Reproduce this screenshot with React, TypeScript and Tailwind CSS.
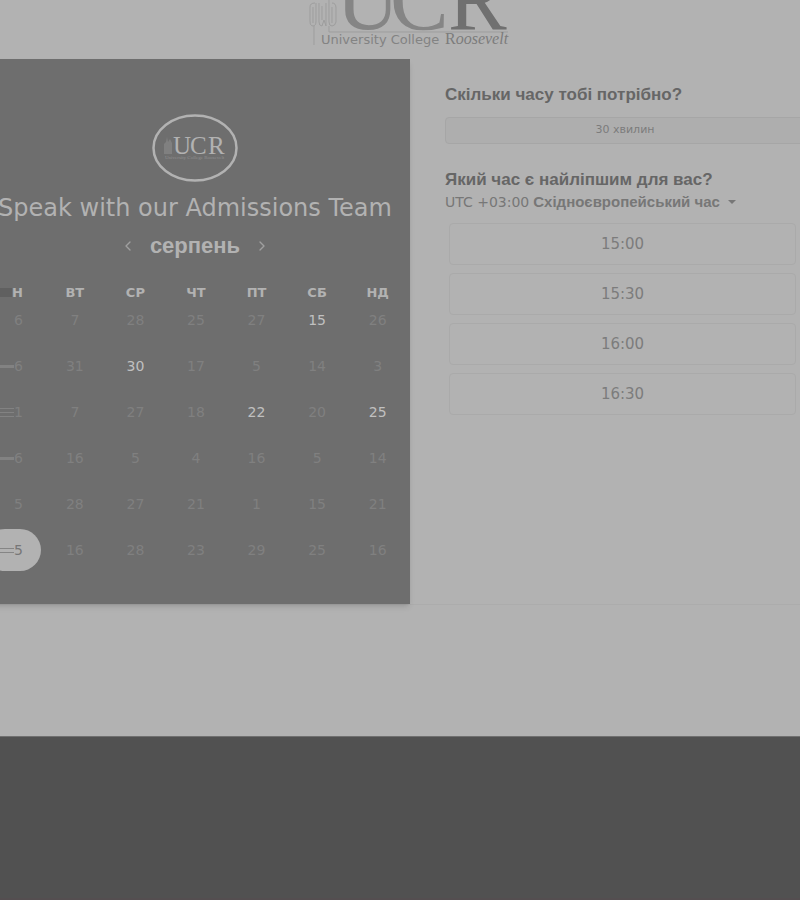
import type { ReactNode } from "react";
import { ChevronLeft, ChevronRight } from "lucide-react";

type Day = { n: string; open?: boolean; selected?: boolean; lines?: number };

const weekdays = ["Н", "ВТ", "СР", "ЧТ", "ПТ", "СБ", "НД"];

const weeks: Day[][] = [
  [{ n: "6" }, { n: "7" }, { n: "28" }, { n: "25" }, { n: "27" }, { n: "15", open: true }, { n: "26" }],
  [{ n: "6", lines: 1 }, { n: "31" }, { n: "30", open: true }, { n: "17" }, { n: "5" }, { n: "14" }, { n: "3" }],
  [{ n: "1", lines: 3 }, { n: "7" }, { n: "27" }, { n: "18" }, { n: "22", open: true }, { n: "20" }, { n: "25", open: true }],
  [{ n: "6", lines: 1 }, { n: "16" }, { n: "5" }, { n: "4" }, { n: "16" }, { n: "5" }, { n: "14" }],
  [{ n: "5" }, { n: "28" }, { n: "27" }, { n: "21" }, { n: "1" }, { n: "15" }, { n: "21" }],
  [{ n: "5", selected: true, lines: 2 }, { n: "16" }, { n: "28" }, { n: "23" }, { n: "29" }, { n: "25" }, { n: "16" }],
];

const times = ["15:00", "15:30", "16:00", "16:30"];

function Logo() {
  return (
    <svg viewBox="0 0 210 59" className="h-[59px] w-[210px]" role="img" aria-label="UCR University College Roosevelt">
      <g fill="none" stroke="#9d9d9d" strokeWidth="1">
        <path d="M6 3q-5 0-5 4v14q0 5 3 5t3-5V3M10 3v19q0 4 3 4l2-6 2 6V3M20 0v22q0 4 3 4t4-4V8q0-5-4-5M5 26v19M20 26v6h179" />
        <path d="M4 7v16M13 6v14M23 7v16" />
      </g>
      <g fontFamily="Liberation Serif, serif" fontSize="88">
        <text x="27" y="29" fill="#858585">U</text>
        <text x="81" y="29" fill="#858585">C</text>
        <text x="139" y="29" fill="#707070">R</text>
      </g>
      <text x="12" y="44" fontFamily="DejaVu Sans, sans-serif" fontSize="13" fill="#838383">University College</text>
      <text x="136" y="44" fontFamily="Liberation Serif, serif" fontSize="16" fill="#7c7c7c">
        R<tspan fontStyle="italic">oosevelt</tspan>
      </text>
    </svg>
  );
}

function Badge() {
  return (
    <svg viewBox="0 0 86 68" className="h-[68px] w-[86px]" role="img" aria-label="UCR">
      <ellipse cx="43" cy="34" rx="41.5" ry="32.5" fill="none" stroke="#b2b2b2" strokeWidth="2.5" />
      <path d="M12 40V30l2-2 1-5 1 5 2-3 2 4v11z" fill="#808080" />
      <g fontFamily="Liberation Serif, serif" fontSize="25" fill="#b2b2b2">
        <text x="21" y="40">U</text>
        <text x="38" y="40">C</text>
        <text x="56" y="40">R</text>
      </g>
      <text x="13" y="45" fontFamily="Liberation Serif, serif" fontSize="5" fill="#909090">University College Roosevelt</text>
    </svg>
  );
}

function Lines({ count, dark }: { count: number; dark?: boolean }) {
  return (
    <span aria-hidden="true" className="flex w-[14px] shrink-0 flex-col gap-[3px]">
      {Array.from({ length: count }, (_, i) => (
        <span key={i} className={`w-full ${count === 1 ? "h-[3px]" : "h-px"} ${dark ? "bg-[#858585]" : "bg-[#828282]"}`} />
      ))}
    </span>
  );
}

function Heading({ children }: { children: ReactNode }) {
  return <h2 className="font-['Liberation_Sans',sans-serif] text-[17px] leading-5 font-bold text-[#666666]">{children}</h2>;
}

export default function App() {
  return (
    <div className="flex min-h-screen flex-col overflow-hidden bg-[#b2b2b2] font-['DejaVu_Sans',sans-serif]">
      <header className="flex justify-center pl-7">
        <Logo />
      </header>

      <main className="-mx-5 grid grid-cols-[43fr_41fr] border-b border-[#acacac]">
        <section className="bg-[#6e6e6e] pt-[55px] pb-[31px] text-[#b2b2b2] shadow-md">
          <div className="flex justify-center">
            <Badge />
          </div>
          <h1 className="mt-3 text-center text-2xl leading-7 whitespace-nowrap">Speak with our Admissions Team</h1>
          <div className="mt-3 flex items-center justify-center gap-[14px]">
            <button type="button" aria-label="Попередній місяць">
              <ChevronLeft className="size-4 text-[#a0a0a0]" />
            </button>
            <span className="font-['Liberation_Sans',sans-serif] text-[22px] leading-6 font-bold">серпень</span>
            <button type="button" aria-label="Наступний місяць">
              <ChevronRight className="size-4 text-[#a0a0a0]" />
            </button>
          </div>

          <div className="mt-[30px] pr-[2px] pl-[4px]">
            <table className="w-full table-fixed border-collapse text-center">
              <thead>
                <tr>
                  {weekdays.map((day, i) => (
                    <th key={day} scope="col" className="h-[9px] p-0 text-[13px] leading-[9px] font-bold">
                      {i === 0 ? (
                        <span className="flex items-center pl-4">
                          <span aria-hidden="true" className="h-[9px] w-[12px] bg-[#606060]" />Н
                        </span>
                      ) : (
                        day
                      )}
                    </th>
                  ))}
                </tr>
              </thead>
              <tbody>
                {weeks.map((week, w) => (
                  <tr key={w}>
                    {week.map((day, d) => (
                      <td key={d} className="h-[46px] p-0">
                        <button
                          type="button"
                          disabled={!day.open && !day.selected}
                          className={`flex h-[42px] items-center text-[14px] leading-4 ${
                            d === 0 ? "w-[57px] pl-4" : "mx-auto w-14 justify-center"
                          } ${
                            day.selected
                              ? "rounded-full bg-[#b2b2b2] text-[#777777]"
                              : day.open
                                ? "text-[#c0c0c0]"
                                : "text-[#808080]"
                          }`}
                        >
                          {d === 0 && <Lines count={day.lines ?? 0} dark={day.selected} />}
                          {day.n}
                        </button>
                      </td>
                    ))}
                  </tr>
                ))}
              </tbody>
            </table>
          </div>
        </section>

        <section className="pt-[26px] pr-[15px] pl-[35px]">
          <Heading>Скільки часу тобі потрібно?</Heading>
          <button type="button" className="mt-3 h-[27px] w-full rounded-sm border border-[#a6a6a6] bg-[#aeaeae] text-[11px] text-[#7c7c7c]">
            30 хвилин
          </button>
          <div className="mt-[26px]">
            <Heading>Який час є найліпшим для вас?</Heading>
          </div>
          <button type="button" className="mt-[2px] flex items-center gap-1 text-[14px] leading-5 text-[#777777]">
            <span>UTC +03:00</span>
            <span className="font-['Liberation_Sans',sans-serif] text-[15px] font-bold">Східноєвропейський час</span>
            <svg viewBox="0 0 8 4" className="ml-1 h-1 w-2" aria-hidden="true">
              <path d="M0 0h8L4 4z" fill="#777777" />
            </svg>
          </button>
          <div className="mt-[11px] flex flex-col gap-2 pr-[9px] pl-1">
            {times.map((time) => (
              <button key={time} type="button" className="h-[42px] rounded-sm border border-[#aaaaaa] text-[15px] leading-5 text-[#7c7c7c]">
                {time}
              </button>
            ))}
          </div>
        </section>
      </main>

      <footer className="mt-[131px] flex-1 border-t border-b-2 border-t-[#707070] border-b-[#544e50] bg-[#515151]" />
    </div>
  );
}
